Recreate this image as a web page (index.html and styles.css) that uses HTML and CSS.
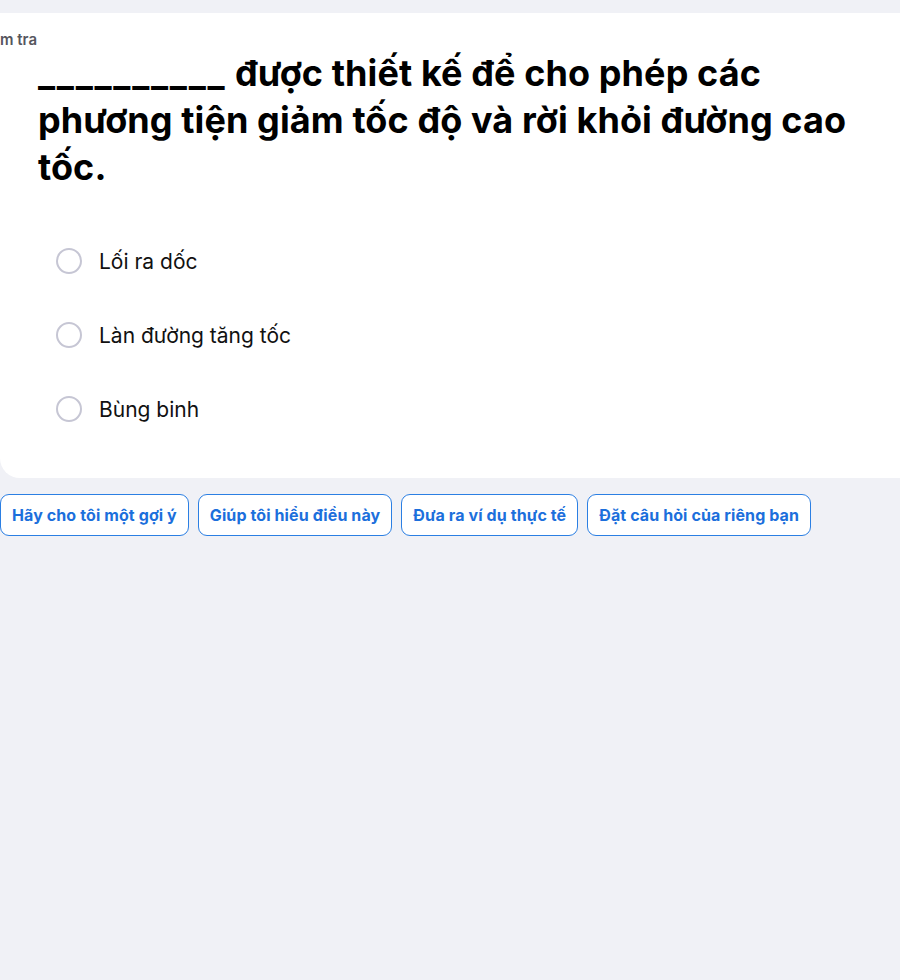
FILE: index.html
```html
<!DOCTYPE html>
<html lang="vi">
<head>
<meta charset="utf-8">
<link rel="stylesheet" href="styles.css">
</head>
<body>
<div class="page">
  <section class="card">
    <div class="label">m tra</div>
    <h1 class="question"><span class="blank">__________</span><span> được thiết kế để cho phép các phương tiện giảm tốc độ và rời khỏi đường cao tốc.</span></h1>
    <div class="options">
      <label class="option"><span class="radio"></span><span class="opt-text">Lối ra dốc</span></label>
      <label class="option"><span class="radio"></span><span class="opt-text">Làn đường tăng tốc</span></label>
      <label class="option"><span class="radio"></span><span class="opt-text">Bùng binh</span></label>
    </div>
  </section>
  <div class="actions">
    <button class="chip">Hãy cho tôi một gợi ý</button>
    <button class="chip">Giúp tôi hiểu điều này</button>
    <button class="chip">Đưa ra ví dụ thực tế</button>
    <button class="chip">Đặt câu hỏi của riêng bạn</button>
  </div>
</div>
</body>
</html>
```
FILE: styles.css
```css
html, body {
  margin: 0;
  padding: 0;
  background: #f0f1f6;
  overflow: hidden;
  font-family: "Inter", "Open Sans", "Liberation Sans", sans-serif;
}
.page {
  padding-top: 13px;
  width: 900px;
  height: 967px;
}
.card {
  background: #ffffff;
  margin-right: -20px;
  border-radius: 0 16px 16px 20px;
  padding: 17px 0 32px 0;
}
.label {
  font-size: 15px;
  line-height: 20px;
  font-weight: 600;
  color: #56565e;
}
.question {
  width: 830px;
  margin: 0 0 0 38px;
  font-size: 36px;
  line-height: 47px;
  font-weight: 700;
  color: #000;
  letter-spacing: 0.1px;
}
.blank {
  letter-spacing: 1.7px;
}
.options {
  margin-top: 33px;
  margin-left: 56px;
  display: flex;
  flex-direction: column;
}
.option {
  display: flex;
  align-items: center;
  gap: 17px;
  height: 74px;
}
.radio {
  width: 22px;
  height: 22px;
  border: 2px solid #c6c6d4;
  border-radius: 50%;
  flex: none;
}
.opt-text {
  font-size: 21px;
  color: #111;
}
.actions {
  display: flex;
  gap: 9px;
  margin-top: 16px;
}
.chip {
  height: 42px;
  padding: 0 11px;
  background: #fff;
  border: 1px solid #2b7fe3;
  border-radius: 9px;
  font-family: "Inter", "Open Sans", "Liberation Sans", sans-serif;
  font-size: 16px;
  font-weight: 700;
  letter-spacing: 0.1px;
  color: #1c6fdc;
  cursor: pointer;
}
```
